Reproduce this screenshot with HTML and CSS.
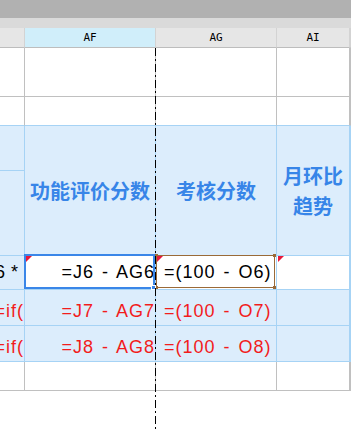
FILE: index.html
```html
<!DOCTYPE html>
<html lang="zh-CN">
<head>
    <meta charset="UTF-8">
    <meta name="viewport" content="width=device-width, initial-scale=1.0">
    <title>考核表</title>
    <link rel="stylesheet" href="styles.css">
</head>
<body>
    <div class="titlebar"></div>
    <div class="ruler"></div>

    <div class="sheet">
        <!-- 列标题 -->
        <div class="cell head"></div>
        <div class="cell head on">AF</div>
        <div class="cell head">AG</div>
        <div class="cell head">AI</div>
        <div class="cell head"></div>

        <!-- 第1、2行 -->
        <div class="cell"></div>
        <div class="cell"></div>
        <div class="cell"></div>
        <div class="cell"></div>
        <div class="cell"></div>

        <div class="cell edge"></div>
        <div class="cell edge"></div>
        <div class="cell edge"></div>
        <div class="cell edge"></div>
        <div class="cell edge"></div>

        <!-- 表头 合并3行 -->
        <div class="cell blue"></div>
        <div class="cell blue title">功能评价分数</div>
        <div class="cell blue title">考核分数</div>
        <div class="cell blue title">月环比<br>趋势</div>
        <div class="cell blue"></div>
        <div class="cell blue tall"></div>
        <div class="cell blue"></div>
        <div class="cell blue"></div>

        <!-- 第6行 当前选中 -->
        <div class="cell blue num first">
            <span class="txt right star">6 *</span>
        </div>
        <div class="cell blue white num first">
            <span class="txt right">=J6 - AG6</span>
            <i class="mark"></i>
            <i class="sel"><i class="handle"></i></i>
        </div>
        <div class="cell blue white num first">
            <span class="txt pad">=(100 - O6)</span>
            <i class="mark"></i>
            <i class="ref">
                <i class="dot tl"></i><i class="dot tr"></i>
                <i class="dot bl"></i><i class="dot br"></i>
            </i>
        </div>
        <div class="cell blue white num first">
            <i class="mark"></i>
        </div>
        <div class="cell blue white"></div>

        <!-- 第7、8行 -->
        <div class="cell blue num red">
            <span class="txt right">=if(</span>
        </div>
        <div class="cell blue num red">
            <span class="txt right">=J7 - AG7</span>
        </div>
        <div class="cell blue num red">
            <span class="txt pad">=(100 - O7)</span>
        </div>
        <div class="cell blue"></div>
        <div class="cell blue"></div>

        <div class="cell blue num red">
            <span class="txt right">=if(</span>
        </div>
        <div class="cell blue num red">
            <span class="txt right">=J8 - AG8</span>
        </div>
        <div class="cell blue num red">
            <span class="txt pad">=(100 - O8)</span>
        </div>
        <div class="cell blue"></div>
        <div class="cell blue"></div>

        <!-- 第9行 -->
        <div class="cell"></div>
        <div class="cell"></div>
        <div class="cell"></div>
        <div class="cell"></div>
        <div class="cell"></div>
    </div>

    <!-- 分页线 -->
    <div class="pagebreak"></div>
</body>
</html>
```

FILE: styles.css
```css
* {
    margin: 0;
    padding: 0;
    box-sizing: border-box;
}
body {
    position: relative;
    width: 351px;
    height: 429px;
    overflow: hidden;
    background: #fff;
    font-family: "Liberation Sans", "Noto Sans CJK SC", sans-serif;
}
.titlebar {
    height: 18px;
    background: #b1b1b1;
}
.ruler {
    height: 10px;
    background: #dadada;
}

/* 表格 */
.sheet {
    display: grid;
    grid-template-columns: 25px 131px 121px 73px 1fr;
    grid-template-rows: 20px 49px 29px 45px 44px 41px 34px 36px 36px 29px;
}
.cell {
    border-right: 1px solid #c0c0c0;
    border-bottom: 1px solid #c0c0c0;
}
.head {
    display: flex;
    align-items: center;
    justify-content: center;
    background: #e6e6e6;
    border-right-color: #d3d3d3;
    border-bottom-color: #bdbdbd;
    font: 11px "DejaVu Sans Mono", monospace;
    color: #000;
}
.head.on {
    background: #d0eefa;
}
.edge {
    border-bottom-color: #a6d3f5;
}
.blue {
    background: #dcedfc;
    border-color: #a6d3f5;
}
.white {
    background: #fff;
}
.tall {
    grid-row: span 2;
}
.title {
    grid-row: span 3;
    display: flex;
    align-items: center;
    justify-content: center;
    text-align: center;
    font: bold 20px/30px "Noto Sans CJK SC", sans-serif;
    color: #3785e8;
}

/* 公式单元格 */
.num {
    position: relative;
    display: flex;
    align-items: flex-end;
    padding-bottom: 4px;
    font-size: 18px;
    line-height: 20px;
    letter-spacing: 1px;
    word-spacing: 2px;
    color: #000;
}
.num.first {
    padding-bottom: 7px;
}
.red {
    color: #f21c1c;
}
.txt {
    flex: 1;
    overflow: hidden;
    white-space: nowrap;
}
.txt.right {
    display: flex;
    justify-content: flex-end;
}
.txt.star {
    padding-right: 5px;
    word-spacing: -1px;
}
.txt.pad {
    padding-left: 8px;
}

/* 批注角标 */
.mark {
    position: absolute;
    top: 0;
    left: 1px;
    width: 0;
    height: 0;
    border-top: 6px solid #e8173a;
    border-right: 6px solid transparent;
    z-index: 3;
}

/* 选中框 */
.sel {
    position: absolute;
    top: -2px;
    left: -1px;
    right: 0;
    bottom: 0;
    border: 2px solid #3a86e8;
    z-index: 2;
}
.handle {
    position: absolute;
    right: -3px;
    bottom: -3px;
    width: 5px;
    height: 5px;
    background: #3a86e8;
    border: 1px solid #fff;
}

/* 引用框 */
.ref {
    position: absolute;
    top: -1px;
    left: 0;
    right: 1px;
    bottom: 1px;
    border: 1px solid #9a6a38;
    z-index: 1;
}
.dot {
    position: absolute;
    width: 3px;
    height: 3px;
    background: #9a6a38;
}
.tl { top: -2px; left: -2px; }
.tr { top: -2px; right: -2px; }
.bl { bottom: -2px; left: -2px; }
.br { bottom: -2px; right: -2px; }

/* 分页虚线 */
.pagebreak {
    position: absolute;
    left: 155px;
    top: 48px;
    bottom: 0;
    width: 1px;
    background: repeating-linear-gradient(to bottom, #000 0 8px, transparent 8px 11px, #000 11px 13px, transparent 13px 16px);
    z-index: 4;
}
```
